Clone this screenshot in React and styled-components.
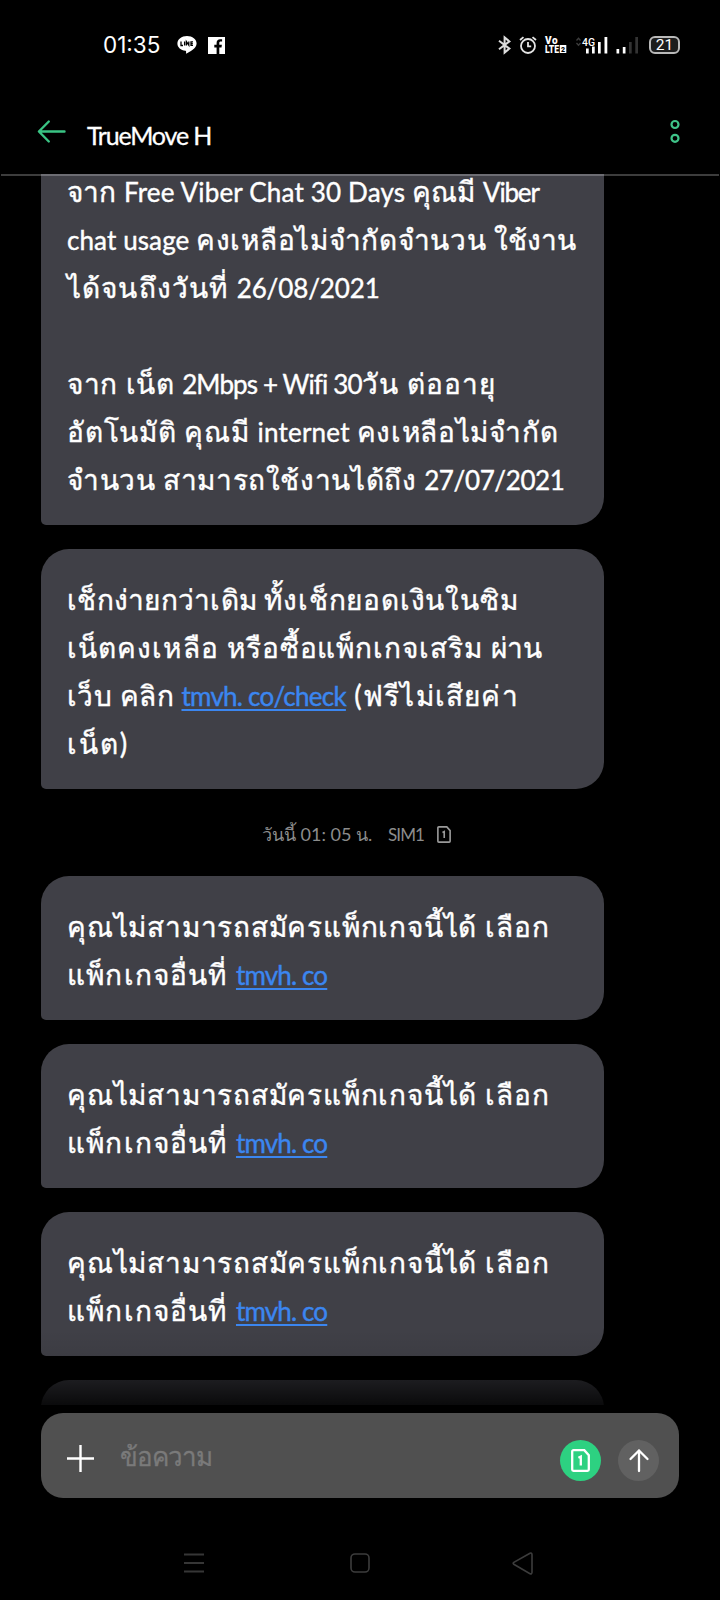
import React from "react";
import styled, { createGlobalStyle } from "styled-components";

const GlobalStyle = createGlobalStyle`
    * {
        box-sizing: border-box;
    }
    body {
        margin: 0;
        background: #000;
        color: #fff;
        font-family: Lato, "Noto Sans", sans-serif;
    }
    svg {
        flex: none;
        overflow: visible;
    }
`;

const Screen = styled.div`
    display: flex;
    flex-direction: column;
    width: 720px;
    height: 1600px;
    overflow: hidden;
    background: #000;
`;

// status bar
const StatusBar = styled.div`
    display: flex;
    flex: none;
    align-items: center;
    justify-content: space-between;
    height: 90px;
    padding: 0 40px 0 103px;
`;

const StatusGroup = styled.div`
    display: flex;
    align-items: center;
    gap: ${(p) => p.$gap || 0}px;
`;

const Clock = styled.span`
    width: 59px;
    margin-right: 4px;
    font-family: Inter, sans-serif;
    font-size: 22.5px;
    font-weight: 400;
    line-height: 30px;
    white-space: nowrap;
`;

const Battery = styled.div`
    display: flex;
    align-items: center;
    justify-content: center;
    width: 31px;
    height: 18px;
    margin-left: 2px;
    border: 2px solid #b9b9b9;
    border-radius: 6px;
    background: #1c1c1c;
    font-family: Roboto, sans-serif;
    font-size: 15.5px;
    line-height: 14px;
`;

// header
const Header = styled.header`
    display: flex;
    flex: none;
    align-items: center;
    position: relative;
    z-index: 1;
    height: 86px;
    margin: 0 1px -2px;
    padding: 0 39px 0 36px;
    border-bottom: 2px solid rgba(255, 255, 255, 0.24);
`;

const Title = styled.h1`
    flex: 1;
    margin: 5px 0 0 21px;
    font-size: 25px;
    font-weight: 400;
    line-height: 30px;
    letter-spacing: -1.17px;
    -webkit-text-stroke: 0.3px #fff;
`;

// messages
const Messages = styled.main`
    display: flex;
    flex: none;
    flex-direction: column;
    align-items: flex-start;
    height: 1231px;
    padding-left: 41px;
    overflow: hidden;
    position: relative;
`;

const Bubble = styled.div`
    flex: none;
    width: 563px;
    min-height: 144px;
    margin-top: ${(p) => (p.$first ? -33 : 0)}px;
    margin-bottom: 24px;
    padding: 24px 26px;
    border-radius: 28px 28px 28px 5px;
    background: #404047;
`;

const Line = styled.div`
    height: 48px;
    padding-top: 3px;
    line-height: 48px;
    white-space: pre;
`;

const Run = styled.span`
    font-size: ${(p) => (p.$latin ? 26 : 28)}px;
    line-height: 46px;
    letter-spacing: ${(p) => p.$ls}px;
    -webkit-text-stroke: 0.4px currentColor;
`;

const Link = styled(Run).attrs({ as: "a", href: "#", $latin: true })`
    color: #3b86f0;
    text-decoration: underline;
    text-decoration-thickness: 2px;
    text-underline-offset: 3px;
`;

const DateRow = styled.div`
    display: flex;
    flex: none;
    align-items: center;
    width: 679px;
    height: 63px;
    padding: 0 0 0 221px;
    margin: -10px 0 10px;
    color: #8c8c8c;
    font-size: 18px;
    white-space: pre;
`;

const DateText = styled.span`
    width: 126px;
`;

const SimText = styled.span`
    width: 49px;
    letter-spacing: -0.9px;
    font-size: 17px;
`;

const Fade = styled.div`
    position: absolute;
    right: 0;
    bottom: 0;
    left: 0;
    height: 75px;
    background: linear-gradient(
        rgba(0, 0, 0, 0) 0%,
        rgba(0, 0, 0, 0.06) 33%,
        rgba(0, 0, 0, 0.5) 64%,
        rgba(0, 0, 0, 0.55) 66%,
        rgba(0, 0, 0, 0.84) 100%
    );
`;

// composer
const Composer = styled.div`
    display: flex;
    flex: none;
    align-items: center;
    width: 638px;
    height: 85px;
    margin: 8px 0 0 41px;
    padding: 5px 20px 0 26px;
    border-radius: 22px;
    background: #505050;
`;

const Placeholder = styled.span`
    flex: 1;
    margin: -3px 0 0 26px;
    color: #7a7a7a;
    font-size: 26px;
    letter-spacing: -1.1px;
    -webkit-text-stroke: 0.3px currentColor;
`;

const RoundButton = styled.button`
    display: flex;
    align-items: center;
    justify-content: center;
    width: 41px;
    height: 41px;
    margin: 5px 0 0 ${(p) => p.$gap || 0}px;
    padding: 0;
    border: 0;
    border-radius: 50%;
    background: ${(p) => p.$bg};
`;

const NavBar = styled.nav`
    display: flex;
    align-items: center;
    gap: 146px;
    height: 75px;
    margin-top: 28px;
    padding-left: 184px;
`;

const NavButton = styled.span`
    display: flex;
    justify-content: center;
    width: 20px;
    margin-right: ${(p) => p.$wide || 0}px;
`;

const LineIcon = () => (
    <svg width="20" height="18" viewBox="0 0 20 18">
        <path d="M10 0C4.6 0 .4 3.3.4 7.5c0 3.8 3.4 6.8 8 7.3.9.2.8 1 .6 2.9 3.6-1.7 10.6-5.1 10.6-10.2C19.6 3.3 15.4 0 10 0z" fill="#fff" />
        <path d="M4 5.6v3.9h2M7.6 5.6v3.900M9.400 9.500V5.600l2.400 3.600V5.600M16 5.800h-2v3.500h2M14 7.600h1.800" fill="none" stroke="#000" strokeWidth="1.300" />
    </svg>
);

const FacebookIcon = () => (
    <svg width="17" height="17" viewBox="0 0 17 17">
        <rect width="17" height="17" fill="#fff" />
        <path d="M8.6 17v-6.6H6.3V7.8h2.3V6c0-2.4 1.4-3.7 3.5-3.7h2v2.3h-1.3c-1.1 0-1.5.5-1.5 1.5v1.7h2.6l-.4 2.6h-2.2V17z" fill="#000" />
    </svg>
);

const BluetoothIcon = () => (
    <svg width="13" height="18" viewBox="0 0 13 18">
        <path d="M1 4.800l10.400 7.800L6.600 16.600V1.400l4.800 4L1 13.200" fill="none" stroke="#ddd" strokeWidth="2" />
    </svg>
);

const AlarmIcon = () => (
    <svg width="18" height="18" viewBox="0 0 18 18" fill="none" stroke="#e4e4e4" strokeWidth="1.8">
        <circle cx="9" cy="10" r="7" />
        <path d="M9 6v4.400h3.200M1 4l3.500-2.900M17 4l-3.500-2.900" />
    </svg>
);

const VolteIcon = () => (
    <svg width="22" height="18" viewBox="0 0 22 18" fontFamily="Roboto, sans-serif" fontWeight="900" fill="#fff">
        <text x="0" y="8" fontSize="10" textLength="12.500">Vo</text>
        <text x="0" y="17" fontSize="10" textLength="14" lengthAdjust="spacingAndGlyphs">LTE</text>
        <rect x="14.800" y="9" width="6.500" height="8" fill="#fff" />
        <text x="16" y="15.800" fontSize="7" fill="#000">2</text>
    </svg>
);

const MainSignal = () => (
    <svg width="33" height="18" viewBox="0 0 33 18">
        <path d="M1.500 4.500L3.500 2.200L5.500 4.500M1.500 7L3.500 9.300L5.500 7" fill="none" stroke="#3d3d3d" strokeWidth="1.300" />
        <text x="7" y="9.500" fontFamily="Roboto, sans-serif" fontSize="11" fontWeight="500" fill="#fff" textLength="13" lengthAdjust="spacingAndGlyphs">4G</text>
        <path d="M11 12.500h2.700v5H11zM17 10.500h2.700v7H17zM23 6h2.700v11.500H23zM29.500 1h2.800v16.500h-2.800z" fill="#fff" />
    </svg>
);

const SecondSignal = () => (
    <svg width="23" height="18" viewBox="0 0 23 18">
        <path d="M.5 13h2.700v4.500H.5zM6.800 11h2.700v6.500H6.800z" fill="#fff" />
        <path d="M13 6h2.700v11.500H13zM19.300 1H22v16.500h-2.700z" fill="#333" />
    </svg>
);

const BackIcon = () => (
    <svg width="29" height="24" viewBox="0 0 29 24">
        <path d="M27.500 11.500H2M11.800 1.500L1.900 11.500l9.900 10" fill="none" stroke="#3ac484" strokeWidth="2.400" strokeLinecap="round" strokeLinejoin="round" />
    </svg>
);

const MoreIcon = () => (
    <svg width="10" height="24" viewBox="0 0 10 24" fill="none" stroke="#3fc489" strokeWidth="2.200">
        <circle cx="5" cy="4.500" r="3.500" />
        <circle cx="5" cy="18.300" r="3.500" />
    </svg>
);

const SimIcon = ({ width, height, color, stroke }) => (
    <svg width={width} height={height} viewBox="0 0 19 23" fill="none" stroke={color} strokeWidth={stroke}>
        <path d="M2.500 1.200h10.800l4.500 5v14.300a1.300 1.300 0 0 1-1.300 1.300h-14a1.300 1.300 0 0 1-1.300-1.300v-18a1.300 1.300 0 0 1 1.300-1.300z" />
        <path d="M7.400 8.800l2.400-1.200v8.800" />
    </svg>
);

const PlusIcon = () => (
    <svg width="27" height="27" viewBox="0 0 27 27">
        <path d="M13.500 0v27M0 13.500h27" stroke="#fff" strokeWidth="2.400" />
    </svg>
);

const SendIcon = () => (
    <svg width="20" height="23" viewBox="0 0 20 23">
        <path d="M10 22V1.500M1.500 10L10 1.500l8.500 8.500" fill="none" stroke="#fff" strokeWidth="2.300" strokeLinecap="round" strokeLinejoin="round" />
    </svg>
);

// [text, letter spacing, kind]
const balance = [
    [["จาก ", 0.21], ["Free Viber Chat 30 Days ", 0.17, "latin"], ["คุณมี ", 0.21], ["Viber", -1.2, "latin"]],
    [["chat usage ", 0.1, "latin"], ["คงเหลือไม่จำกัดจำนวน ", 0.68], ["ใช้งาน", 0]],
    [["ได้จนถึงวันที่ ", 1.15], ["26/08/2021", -0.12, "latin"]],
    [],
    [["จาก เน็ต ", 0.6], ["2Mbps + Wifi 30", -0.88, "latin"], ["วัน ต่ออายุ", 1.05]],
    [["อัตโนมัติ คุณมี ", 0.75], ["internet ", 0.2, "latin"], ["คงเหลือไม่จำกัด", 0.7]],
    [["จำนวน สามารถใช้งานได้ถึง ", 0.61], ["27/07/2021", -0.38, "latin"]],
];

const checkInfo = [
    [["เช็กง่ายกว่าเดิม ", 0.25], ["ทั้งเช็กยอดเงินในซิม", 0.8]],
    [["เน็ตคงเหลือ ", 1.08], ["หรือซื้อแพ็กเกจเสริม ", 0.9], ["ผ่าน", 0.33]],
    [["เว็บ คลิก ", 0.39], ["tmvh. co/check", -0.75, "link"], [" (ฟรีไม่เสียค่า", 1.2]],
    [["เน็ต)", 1.9]],
];

const rejected = [
    [["คุณไม่สามารถสมัครแพ็กเกจนี้ได้ ", 0.79], ["เลือก", 0.9]],
    [["แพ็กเกจอื่นที่ ", 1.18], ["tmvh. co", -0.85, "link"]],
];

const Message = ({ lines = [], first }) => (
    <Bubble $first={first}>
        {lines.map((line, i) => (
            <Line key={i}>
                {line.map(([text, ls, kind], j) =>
                    kind === "link" ? (
                        <Link key={j} $ls={ls}>{text}</Link>
                    ) : (
                        <Run key={j} $ls={ls} $latin={kind === "latin"}>{text}</Run>
                    )
                )}
            </Line>
        ))}
    </Bubble>
);

const App = () => {
    return (
        <Screen>
            <GlobalStyle />
            <StatusBar>
                <StatusGroup $gap={11}>
                    <Clock>01:35</Clock>
                    <LineIcon />
                    <FacebookIcon />
                </StatusGroup>
                <StatusGroup $gap={8}>
                    <BluetoothIcon />
                    <AlarmIcon />
                    <VolteIcon />
                    <MainSignal />
                    <SecondSignal />
                    <Battery>21</Battery>
                </StatusGroup>
            </StatusBar>

            <Header>
                <BackIcon />
                <Title>TrueMove H</Title>
                <MoreIcon />
            </Header>

            <Messages>
                <Message lines={balance} first />
                <Message lines={checkInfo} />
                <DateRow>
                    <DateText>วันนี้ 01: 05 น.</DateText>
                    <SimText>SIM1</SimText>
                    <SimIcon width={14} height={17} color="#9a9a9a" stroke={2.2} />
                </DateRow>
                <Message lines={rejected} />
                <Message lines={rejected} />
                <Message lines={rejected} />
                <Message />
                <Fade />
            </Messages>

            <Composer>
                <PlusIcon />
                <Placeholder>ข้อความ</Placeholder>
                <RoundButton $bg="#2dd181">
                    <SimIcon width={19} height={23} color="#fff" stroke={2.3} />
                </RoundButton>
                <RoundButton $bg="#616161" $gap={17}>
                    <SendIcon />
                </RoundButton>
            </Composer>

            <NavBar>
                <NavButton>
                    <svg width="20" height="20" viewBox="0 0 20 20">
                        <path d="M0 1.500h20M0 10h20M0 18.500h20" stroke="#363636" strokeWidth="2" />
                    </svg>
                </NavButton>
                <NavButton $wide={-4}>
                    <svg width="20" height="20" viewBox="0 0 20 20">
                        <rect x="1" y="1" width="18" height="18" rx="4" fill="none" stroke="#3c3c3c" strokeWidth="1.600" />
                    </svg>
                </NavButton>
                <NavButton>
                    <svg width="21" height="23" viewBox="0 0 21 23">
                        <path d="M18 1.200L1.800 10.300q-1.300 1 0 2L18 21.700q1.800.6 2-1.200v-18q-.2-1.900-2-1.300z" fill="none" stroke="#3c3c3c" strokeWidth="1.600" />
                    </svg>
                </NavButton>
            </NavBar>
        </Screen>
    );
};

export default App;
